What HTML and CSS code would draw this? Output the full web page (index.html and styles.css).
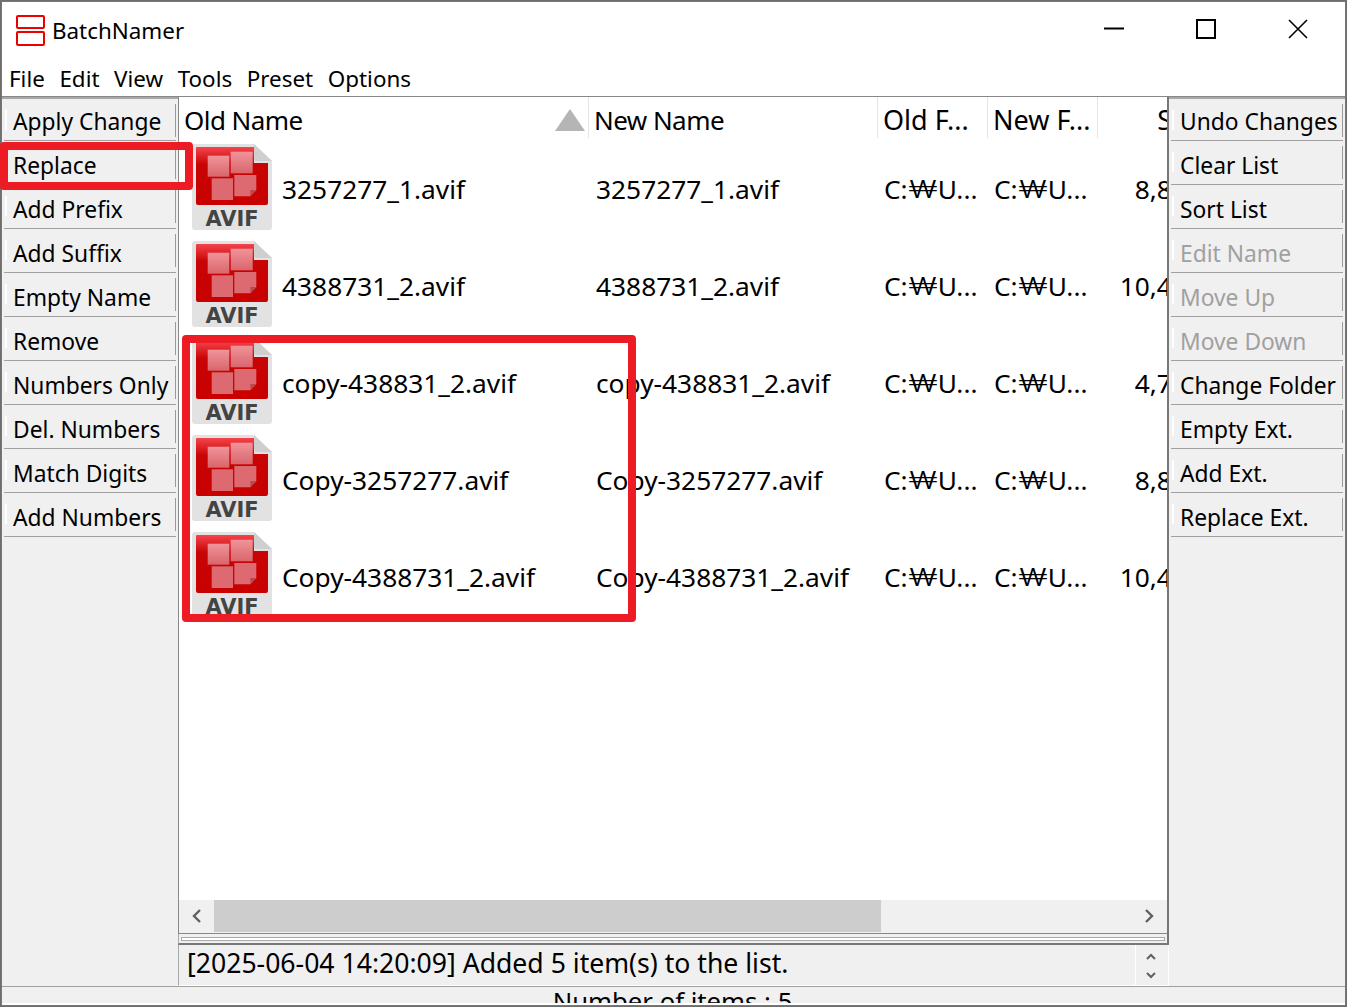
FILE: index.html
```html
<!DOCTYPE html>
<html lang="en">
<head>
<meta charset="utf-8">
<title>BatchNamer</title>
<link rel="stylesheet" href="styles.css">
</head>
<body>
<svg class="defs" width="0" height="0" aria-hidden="true">
  <defs>
    <linearGradient id="redfill" x1="0" y1="0" x2="0" y2="1">
      <stop offset="0" stop-color="#f4444c"/>
      <stop offset="0.3" stop-color="#c80404"/>
      <stop offset="1" stop-color="#c80000"/>
    </linearGradient>
    <linearGradient id="tile" x1="0" y1="0" x2="0" y2="1">
      <stop offset="0" stop-color="#f0949a"/>
      <stop offset="1" stop-color="#d9666c"/>
    </linearGradient>
    <symbol id="avif" viewBox="0 0 80 86">
      <path d="M3 0H62L80 17V83a3 3 0 0 1-3 3H3a3 3 0 0 1-3-3V3a3 3 0 0 1 3-3Z" fill="#e2e2e2"/>
      <path d="M5 3H62V19H76V59a2 2 0 0 1-2 2H6a2 2 0 0 1-2-2V4a1 1 0 0 1 1-1Z" fill="url(#redfill)"/>
      <path d="M62 0L80 17H65a3 3 0 0 1-3-3Z" fill="#cfcfcf"/>
      <rect x="15.7" y="11.7" width="21.6" height="21" fill="url(#tile)"/>
      <rect x="38.7" y="7.7" width="22" height="21.6" fill="url(#tile)"/>
      <rect x="19.7" y="34.3" width="21.3" height="21.7" fill="#dc6a70"/>
      <path d="M42.3 31H64.3V46L58.3 52.3H42.3Z" fill="#dc6a70"/>
      <path d="M64.3 46H58.3V52.3Z" fill="#b84a4e"/>
      <text class="avif-label" x="40" y="81.5" text-anchor="middle">AVIF</text>
    </symbol>
  </defs>
</svg>
<div class="window">
  <header class="titlebar">
    <svg class="app-icon" width="30" height="32" viewBox="0 0 30 32"><rect x="1" y="1" width="27" height="12" rx="1" class="logo-box"/><rect x="1" y="17" width="27" height="13" rx="1" class="logo-box"/></svg>
    <span class="app-name">BatchNamer</span>
    <div class="controls">
      <svg class="ctl ctl-min" width="20" height="20" viewBox="0 0 20 20"><path d="M0 9.5H20" class="ctl-line"/></svg>
      <svg class="ctl ctl-max" width="20" height="20" viewBox="0 0 20 20"><rect x="1" y="1" width="18" height="18" class="ctl-line"/></svg>
      <svg class="ctl ctl-close" width="20" height="20" viewBox="0 0 20 20"><path d="M1 1L19 19M19 1L1 19" class="ctl-thin"/></svg>
    </div>
  </header>
  <nav class="menubar">
    <span>File</span><span>Edit</span><span>View</span><span>Tools</span><span>Preset</span><span>Options</span>
  </nav>
  <main class="body">
    <aside class="toolbar">
      <button class="tb">Apply Change</button>
      <button class="tb">Replace</button>
      <button class="tb">Add Prefix</button>
      <button class="tb">Add Suffix</button>
      <button class="tb">Empty Name</button>
      <button class="tb">Remove</button>
      <button class="tb">Numbers Only</button>
      <button class="tb">Del. Numbers</button>
      <button class="tb">Match Digits</button>
      <button class="tb">Add Numbers</button>
    </aside>
    <section class="center">
      <div class="list">
        <div class="list-head grid">
          <div class="th th-first"><span class="th-tight">Old Name</span><svg class="sort" width="30" height="22" viewBox="0 0 30 22"><path d="M15 0L30 22H0Z"/></svg></div>
          <div class="th"><span class="th-tight">New Name</span></div>
          <div class="th">Old F...</div>
          <div class="th">New F...</div>
          <div class="th th-size">Size</div>
        </div>
        <div class="list-body">
          <div class="row grid"><div class="cell cell-name"><svg class="file-icon" width="80" height="86"><use href="#avif"/></svg>3257277_1.avif</div><div class="cell">3257277_1.avif</div><div class="cell cell-path">C:<span class="won">₩</span>U...</div><div class="cell cell-path">C:<span class="won">₩</span>U...</div><div class="cell cell-size">8,873</div></div>
          <div class="row grid"><div class="cell cell-name"><svg class="file-icon" width="80" height="86"><use href="#avif"/></svg>4388731_2.avif</div><div class="cell">4388731_2.avif</div><div class="cell cell-path">C:<span class="won">₩</span>U...</div><div class="cell cell-path">C:<span class="won">₩</span>U...</div><div class="cell cell-size">10,412</div></div>
          <div class="row grid"><div class="cell cell-name"><svg class="file-icon" width="80" height="86"><use href="#avif"/></svg>copy-438831_2.avif</div><div class="cell">copy-438831_2.avif</div><div class="cell cell-path">C:<span class="won">₩</span>U...</div><div class="cell cell-path">C:<span class="won">₩</span>U...</div><div class="cell cell-size">4,712</div></div>
          <div class="row grid"><div class="cell cell-name"><svg class="file-icon" width="80" height="86"><use href="#avif"/></svg>Copy-3257277.avif</div><div class="cell">Copy-3257277.avif</div><div class="cell cell-path">C:<span class="won">₩</span>U...</div><div class="cell cell-path">C:<span class="won">₩</span>U...</div><div class="cell cell-size">8,873</div></div>
          <div class="row grid"><div class="cell cell-name"><svg class="file-icon" width="80" height="86"><use href="#avif"/></svg>Copy-4388731_2.avif</div><div class="cell">Copy-4388731_2.avif</div><div class="cell cell-path">C:<span class="won">₩</span>U...</div><div class="cell cell-path">C:<span class="won">₩</span>U...</div><div class="cell cell-size">10,412</div></div>
        </div>
        <div class="hscroll">
          <div class="arrow-box"><svg width="12" height="14" viewBox="0 0 12 14"><path d="M9 1L3 7L9 13" class="chev"/></svg></div>
          <div class="thumb"></div>
          <div class="track"></div>
          <div class="arrow-box arrow-right"><svg width="12" height="14" viewBox="0 0 12 14"><path d="M3 1L9 7L3 13" class="chev"/></svg></div>
        </div>
      </div>
      <div class="splitter"><div class="splitter-inner"></div></div>
      <div class="log">
        <div class="log-text">[2025-06-04 14:20:09] Added 5 item(s) to the list.</div>
        <div class="spin">
          <svg width="10" height="7" viewBox="0 0 10 7"><path d="M1 6L5 2L9 6" class="chev-s"/></svg>
          <svg width="10" height="7" viewBox="0 0 10 7"><path d="M1 1L5 5L9 1" class="chev-s"/></svg>
        </div>
      </div>
    </section>
    <aside class="toolbar toolbar-right">
      <button class="tb">Undo Changes</button>
      <button class="tb">Clear List</button>
      <button class="tb">Sort List</button>
      <button class="tb off">Edit Name</button>
      <button class="tb off">Move Up</button>
      <button class="tb off">Move Down</button>
      <button class="tb">Change Folder</button>
      <button class="tb">Empty Ext.</button>
      <button class="tb">Add Ext.</button>
      <button class="tb">Replace Ext.</button>
    </aside>
  </main>
  <footer class="status">Number of items : 5</footer>
  <div class="mark mark-replace"></div>
  <div class="mark mark-files"></div>
</div>
</body>
</html>
```
FILE: styles.css
```css
* { box-sizing: border-box; }
html, body { margin: 0; padding: 0; background: #6e6e6e; }
body { width: 1347px; height: 1007px; overflow: hidden; font-family: "Noto Sans", "Open Sans", "Noto Sans CJK KR", sans-serif; color: #000; }
.defs { position: absolute; }
.avif-label { font-family: "DejaVu Sans", sans-serif; font-weight: 700; font-size: 21px; fill: #444; }
.window { position: relative; width: 1345px; height: 1005px; margin: 1px 0 0 1px; background: #f0f0f0; border: 1px solid #777; display: flex; flex-direction: column; }
.titlebar { flex: none; height: 57px; background: #fff; display: flex; align-items: center; padding: 0 0 0 14px; }
.app-icon { margin-right: 6px; margin-top: 1px; }
.logo-box { fill: #fff; stroke: #ee0000; stroke-width: 2; }
.app-name { font-size: 22.4px; }
.controls { margin-left: auto; display: flex; align-items: center; padding-right: 37px; gap: 71.5px; margin-top: -4px; }
.ctl-close { margin-left: 1px; }
.ctl-line { fill: none; stroke: #000; stroke-width: 2; }
.ctl-thin { fill: none; stroke: #000; stroke-width: 1.6; }
.menubar { flex: none; height: 38px; background: #fff; border-bottom: 1px solid #888; display: flex; align-items: center; gap: 14.6px; padding: 2px 0 0 7px; font-size: 22.4px; }
.body { flex: 1; min-height: 0; display: flex; }
.toolbar { flex: none; width: 176px; border-top: 2px solid #a8a8a8; display: flex; flex-direction: column; padding-left: 2px; }
.toolbar-right { width: 176px; padding-left: 2px; }
.tb { position: relative; flex: none; width: 172px; height: 44px; margin: 0; padding: 5px 0 0 9px; background: #f0f0f0; border: 0; border-bottom: 1px solid #a0a0a0; text-align: left; font: inherit; font-size: 22.8px; color: #000; white-space: nowrap; }
.tb:first-child { height: 42px; padding-top: 3px; }
.tb::before { content: ""; position: absolute; left: 1px; top: 11px; width: 2px; height: 20px; background: #fff; }
.tb::after { content: ""; position: absolute; right: 0; top: 5px; width: 1px; height: 33px; background: #999; }
.off { color: #a0a0a0; }
.center { flex: 1; min-width: 0; display: flex; flex-direction: column; }
.list { flex: 1; min-height: 0; display: flex; flex-direction: column; background: #fff; border-left: 1px solid #888; border-right: 2px solid #777; border-bottom: 1px solid #888; overflow: hidden; }
.grid { display: grid; grid-template-columns: 410px 289px 110px 110px 109px; width: 1028px; }
.list-head { flex: none; height: 43px; }
.th { position: relative; display: flex; align-items: center; padding: 4px 0 0 5px; font-size: 27px; white-space: nowrap; margin: 0 0 3px; border-right: 1px solid #e4e4e4; }
.th-tight { font-size: 26px; letter-spacing: -0.55px; }
.th-first { padding-right: 3px; justify-content: space-between; }
.th-size { justify-content: flex-end; padding-right: 0; border: 0; }
.sort { fill: #b5b5b5; }
.list-body { flex: 1; min-height: 0; overflow: hidden; }
.row { height: 97px; }
.cell { display: flex; align-items: center; padding: 0 0 0 7px; font-size: 26.3px; white-space: nowrap; }
.cell-name { padding-left: 13px; }
.cell-path { padding-left: 6px; }
.won { flex: none; width: 30px; text-align: center; font-family: "Roboto", sans-serif; font-weight: 300; transform: scaleX(1.45); }
.file-icon { flex: none; margin: -3px 10px 0 0; }
.cell-size { justify-content: flex-end; padding: 0 5px 0 0; }
.hscroll { flex: none; height: 33px; display: flex; background: #f0f0f0; padding-bottom: 1px; }
.arrow-box { flex: none; width: 35px; display: flex; align-items: center; justify-content: center; }
.arrow-right { padding-right: 2px; }
.thumb { flex: none; width: 667px; background: #cdcdcd; }
.track { flex: 1; }
.chev { fill: none; stroke: #606060; stroke-width: 2.4; }
.chev-s { fill: none; stroke: #606060; stroke-width: 2; }
.splitter { flex: none; height: 11px; background: #f0f0f0; padding: 3px 2px 0; border-bottom: 2px solid #777; border-right: 2px solid #777; border-left: 1px solid #aaa; }
.splitter-inner { height: 4px; border: 1px solid #a8a8a8; background: #fff; }
.log { flex: none; height: 41px; display: flex; border-left: 1px solid #a8a8a8; border-bottom: 1px solid #fff; border-right: 1px solid #fff; }
.log-text { flex: 1; padding: 0 0 4px 8px; font-size: 26.6px; line-height: 36px; white-space: nowrap; overflow: hidden; }
.spin { flex: none; width: 33px; border-left: 1px solid #fff; display: flex; flex-direction: column; align-items: center; gap: 12px; padding: 8px 3px 0 0; }
.status { flex: none; height: 19px; border-top: 1px solid #a0a0a0; border-bottom: 2px solid #fff; text-align: center; font-size: 25.7px; line-height: 30px; overflow: hidden; padding-right: 2px; }
.mark { position: absolute; border-style: solid; border-color: #ed1c24; border-width: 8px; border-radius: 4px; }
.mark-replace { left: -2px; top: 140px; width: 193px; height: 48px; }
.mark-files { left: 180px; top: 333px; width: 454px; height: 287px; }
```
